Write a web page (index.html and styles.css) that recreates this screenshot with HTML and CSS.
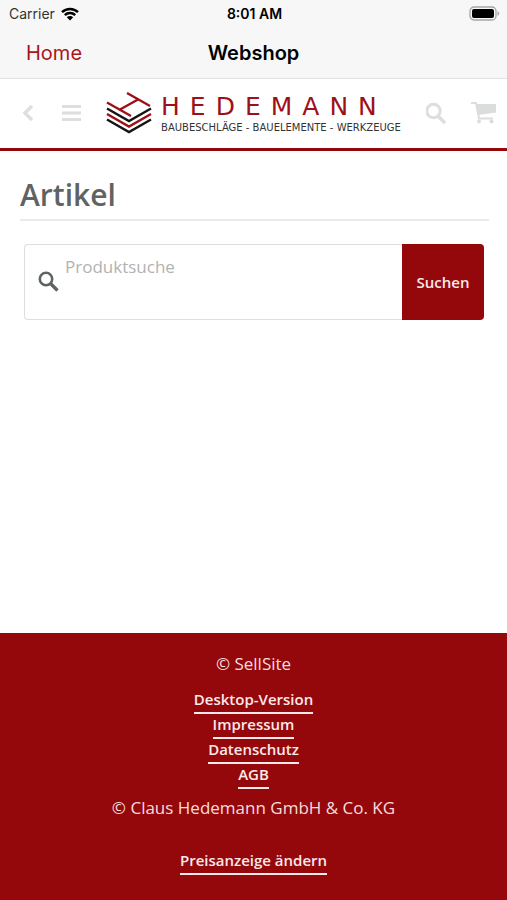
FILE: index.html
```html
<!DOCTYPE html>
<html lang="de">
<head>
<meta charset="utf-8">
<meta name="viewport" content="width=device-width, initial-scale=1">
<title>Webshop</title>
<link rel="stylesheet" href="styles.css">
</head>
<body>
<div class="app-bar">
  <div class="status">
    <div class="carrier">Carrier
      <svg width="20" height="14" viewBox="0 0 20 14" aria-hidden="true"><path d="M2 5.200A11.500 11.500 0 0 1 18 5.200M4.800 8.100A7.500 7.500 0 0 1 15.200 8.100" fill="none" stroke="#000" stroke-width="2.500"/><path d="M6.800 10.200A4.600 4.600 0 0 1 13.200 10.200L10 13.500Z"/></svg>
    </div>
    <div class="clock">8:01 AM</div>
    <div class="battery">
      <svg width="31" height="15" viewBox="0 0 31 15" aria-hidden="true"><rect x="1" y="1" width="26" height="13" rx="4" fill="none" stroke="#a6a6a6" stroke-width="1.300"/><rect x="3" y="3" width="22" height="9" rx="2"/><path d="M28.500 5Q32 7.500 28.500 10Z" fill="#a6a6a6"/></svg>
    </div>
  </div>
  <nav class="title-bar">
    <a class="home" href="#">Home</a>
    <div class="title">Webshop</div>
  </nav>
</div>
<header class="shop-bar">
  <button class="icon-button" aria-label="Zurück"><svg width="15" height="18" viewBox="0 0 15 18"><path d="M10 2L3 9L10 16" fill="none" stroke="#dedede" stroke-width="3.400"/></svg></button>
  <button class="icon-button" aria-label="Menü"><svg width="19" height="18" viewBox="0 0 19 18"><path d="M0 2.500H19M0 9H19M0 15.500H19" stroke="#dedede" stroke-width="3"/></svg></button>
  <a class="logo" href="#">
    <svg width="46" height="44" viewBox="0 0 46 44" aria-hidden="true">
      <g fill="none" stroke-width="2.400">
        <path d="M1 17.500L23 30L45 17.500M1 28.500L23 41L45 28.500" stroke="#151515"/>
        <path d="M1 23L23 35.500L45 23M1 11.500L25 25M21 2L44 15M14 18.500L32 8.500" stroke="#9e1018"/>
      </g>
    </svg>
    <span class="logo-text">
      <span class="brand">HEDEMANN</span>
      <span class="claim">BAUBESCHLÄGE - BAUELEMENTE - WERKZEUGE</span>
    </span>
  </a>
  <button class="icon-button" aria-label="Suche"><svg width="20" height="22" viewBox="1 0 20 22"><circle cx="8.500" cy="9" r="6.700" fill="none" stroke="#dedede" stroke-width="3"/><path d="M13 14L19 20" stroke="#dedede" stroke-width="3.500" stroke-linecap="round"/></svg></button>
  <button class="icon-button" aria-label="Warenkorb"><svg width="25" height="22" viewBox="0 0 25 22"><path d="M0 1H5L8 16.500H22" fill="none" stroke="#dbdcdc" stroke-width="2"/><path d="M5 2H25V10.500L7 13Z" fill="#dbdcdc"/><circle cx="8" cy="19.500" r="2" fill="#dbdcdc"/><circle cx="20.500" cy="19.500" r="2" fill="#dbdcdc"/></svg></button>
</header>
<main class="content">
  <h1>Artikel</h1>
  <form class="search">
    <label class="field">
      <svg width="22" height="22" viewBox="0 0 22 22" aria-hidden="true"><circle cx="8" cy="8" r="6.200" fill="none" stroke="#606364" stroke-width="2.600"/><path d="M12.500 12.500L19.500 19.500" stroke="#606364" stroke-width="3.400"/></svg>
      <textarea placeholder="Produktsuche" aria-label="Produktsuche"></textarea>
    </label>
    <button class="submit" type="button">Suchen</button>
  </form>
</main>
<footer class="footer">
  <p>© SellSite</p>
  <ul>
    <li><a href="#">Desktop-Version</a></li>
    <li><a href="#">Impressum</a></li>
    <li><a href="#">Datenschutz</a></li>
    <li><a href="#">AGB</a></li>
  </ul>
  <p>© Claus Hedemann GmbH &amp; Co. KG</p>
  <div class="price-link"><a href="#">Preisanzeige ändern</a></div>
</footer>
</body>
</html>
```
FILE: styles.css
```css
* {
  box-sizing: border-box;
}

body {
  margin: 0;
  min-height: 100vh;
  display: flex;
  flex-direction: column;
  background: #fff;
  font-family: "Open Sans", sans-serif;
  font-size: 17px;
}

a {
  text-decoration: none;
}

svg {
  display: block;
  flex: none;
}

.app-bar {
  background: #f7f7f7;
  border-bottom: 1px solid #e2e2e2;
  font-family: Inter, sans-serif;
}

.status {
  display: grid;
  grid-template-columns: 1fr auto 1fr;
  align-items: center;
  height: 27px;
  padding: 0 7px 0 9px;
  font-size: 14px;
}

.carrier {
  display: flex;
  align-items: center;
  gap: 5px;
  color: #333;
}

.clock {
  font-weight: 600;
}

.battery {
  justify-self: end;
}

.title-bar {
  display: grid;
  grid-template-columns: 1fr auto 1fr;
  align-items: center;
  height: 51px;
  padding: 0 26px;
  font-size: 20px;
}

.home {
  color: #a9151b;
}

.title {
  font-weight: 600;
}

.shop-bar {
  display: flex;
  align-items: center;
  justify-content: space-between;
  height: 72px;
  padding: 0 11px 2px 22px;
  border-bottom: 3px solid #94080c;
}

.icon-button {
  padding: 0;
  border: 0;
  background: none;
}

.logo {
  display: flex;
  align-items: center;
  gap: 9px;
}

.logo-text {
  display: flex;
  flex-direction: column;
  font-family: "DejaVu Sans", sans-serif;
  white-space: nowrap;
}

.brand {
  margin-right: -10px;
  color: #9e1018;
  font-size: 25px;
  line-height: 30px;
  letter-spacing: 10px;
}

.claim {
  color: #333;
  font-size: 10px;
  line-height: 12px;
}

.content {
  flex: 1;
  padding: 21px 18px 0 20px;
}

h1 {
  margin: 0 0 23px;
  padding-bottom: 2px;
  border-bottom: 2px solid #ebebeb;
  color: #606364;
  font-size: 30px;
  line-height: 45px;
  font-weight: 600;
}

.search {
  display: flex;
  height: 76px;
  margin: 0 5px 0 4px;
}

.field {
  flex: 1;
  display: flex;
  align-items: center;
  gap: 5px;
  padding-left: 13px;
  border: 1px solid #dedede;
  border-right: 0;
  border-radius: 4px 0 0 4px;
}

textarea {
  flex: 1;
  min-width: 0;
  height: 100%;
  padding: 10px 0 0;
  border: 0;
  outline: 0;
  background: none;
  resize: none;
  font: 17px/24px "Open Sans", sans-serif;
}

textarea::placeholder {
  color: #b2b2b2;
}

.submit {
  width: 82px;
  padding: 0;
  border: 0;
  border-radius: 0 4px 4px 0;
  background: #94080c;
  color: #fbe9e9;
  font: 600 15px/20px "Open Sans", sans-serif;
}

.footer {
  padding: 19px 16px 25px;
  background: #94080c;
  color: #f6dddd;
  text-align: center;
  line-height: 24px;
}

.footer p {
  margin: 0;
}

.footer ul {
  margin: 13px 0 7px;
  padding: 0;
  list-style: none;
}

.footer li,
.price-link {
  display: flex;
  justify-content: center;
}

.footer a {
  padding-bottom: 3px;
  border-bottom: 2px solid #fbe9e9;
  color: #fbe9e9;
  font-size: 15px;
  line-height: 20px;
  font-weight: 600;
}

.price-link {
  margin-top: 30px;
}
```
